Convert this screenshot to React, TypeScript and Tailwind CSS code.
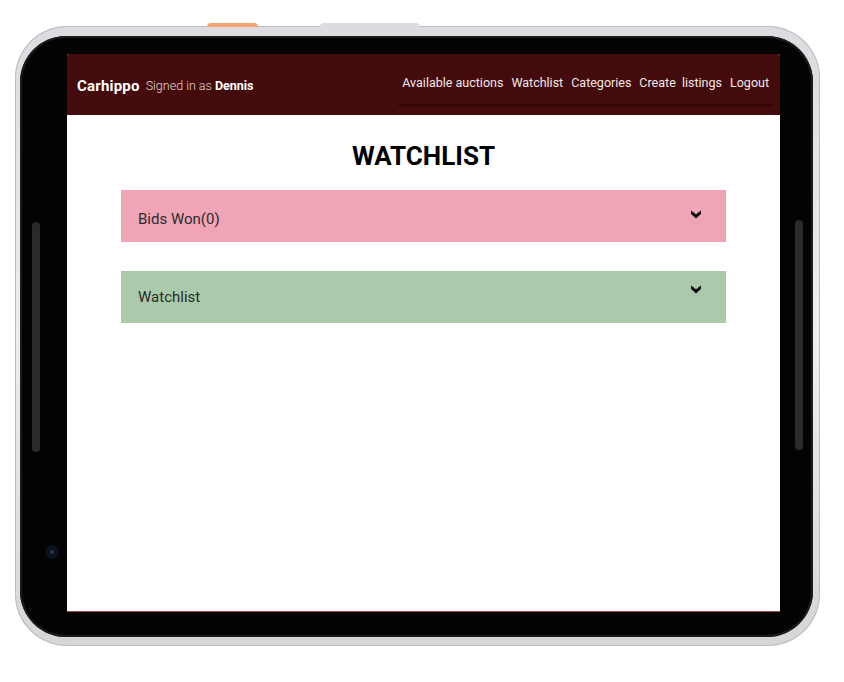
import React from 'react';

const NAV_LINKS = ['Available auctions', 'Watchlist', 'Categories', 'Create  listings', 'Logout'];

const Chevron = ({ className = '' }: { className?: string }) => (
  <svg viewBox="0 0 10 10" className={`h-[10px] w-[10px] ${className}`} fill="#111">
    <path d="M0 1.5 L5 5.2 L10 1.5 L10 5 L5 9.5 L0 5 Z" />
  </svg>
);

const Section = ({
  title,
  bg,
  textClass,
  chevronClass,
}: {
  title: string;
  bg: string;
  textClass: string;
  chevronClass: string;
}) => (
  <div className={`flex h-[52px] items-center justify-between pl-[17px] pr-[25px] ${bg}`}>
    <span className={`text-[15px] text-[#2b2b2b] ${textClass}`}>{title}</span>
    <Chevron className={chevronClass} />
  </div>
);

export default function App() {
  return (
    <div className="relative h-[682px] w-[844px] overflow-hidden bg-white font-['Roboto','Open_Sans',sans-serif]">
      {/* hardware buttons on top edge */}
      <div className="absolute left-[207px] top-[23px] h-[4px] w-[51px] rounded-t-sm bg-[#f6a275]" />
      <div className="absolute left-[320px] top-[23px] h-[5px] w-[100px] rounded-t-sm bg-[#dcdcde]" />

      {/* tablet frame */}
      <div className="ml-[15px] mt-[26px] flex h-[620px] w-[805px] rounded-[52px] bg-gradient-to-b from-[#dcdbe0] via-[#eeeef0] to-[#d6d6d8] pb-[9px] pl-[5px] pr-[7px] pt-[10px] shadow-[inset_0_0_0_1px_#bdbcc2]">
        <div className="relative flex flex-1 flex-col rounded-[46px] bg-[#030303] pb-[25px] pl-[47px] pr-[33px] pt-[18px] shadow-[inset_0_0_0_2px_#1c1c1c]">
          {/* side details */}
          <div className="absolute left-[12px] top-[186px] h-[230px] w-[8px] rounded-full bg-[#2a2a2a]" />
          <div className="absolute right-[10px] top-[184px] h-[230px] w-[8px] rounded-full bg-[#2a2a2a]" />
          <div className="absolute left-[25px] top-[509px] flex h-[14px] w-[14px] items-center justify-center rounded-full bg-[#0d111c]">
            <div className="h-[4px] w-[4px] rounded-full bg-[#24345a]" />
          </div>

          {/* screen */}
          <div className="flex flex-1 flex-col overflow-hidden rounded-t-[3px] border-b border-[#9a4a4a] bg-white">
            <nav className="flex h-[61px] shrink-0 justify-between bg-[#430b0c] pl-[10px] pr-[7px]">
              <div className="flex items-center pt-[3px] text-white">
                <span className="text-[15px] font-bold tracking-[0.2px]">Carhippo</span>
                <span className="ml-[6px] text-[12.5px] font-light text-[#e2d6d6]">Signed in as</span>
                <span className="ml-[3px] text-[12.5px] font-bold">Dennis</span>
              </div>
              <div className="flex flex-col pt-[20px]">
                <div className="flex h-[18px] items-center gap-[8px] pl-[4px] pr-[4px] text-[12.5px] text-[#f3e8e8]">
                  {NAV_LINKS.map((l) => (
                    <span key={l} className="whitespace-pre">
                      {l}
                    </span>
                  ))}
                </div>
                <div className="mt-[12px] h-[2px] bg-[#360607]" />
              </div>
            </nav>

            <h1 className="mt-[24px] text-center text-[26px] font-bold leading-[34px] text-black">WATCHLIST</h1>

            <div className="mx-[54px] mt-[17px] flex flex-col gap-[29px]">
              <Section title="Bids Won(0)" bg="bg-[#f0a5b7]" textClass="pt-[6px]" chevronClass="mb-[5px]" />
              <Section title="Watchlist" bg="bg-[#aacaab]" textClass="pt-[1px]" chevronClass="mb-[17px]" />
            </div>
          </div>
        </div>
      </div>
    </div>
  );
}
